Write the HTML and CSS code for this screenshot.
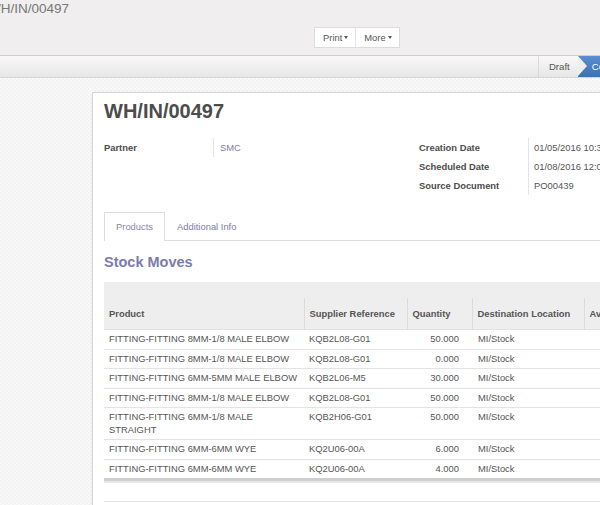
FILE: index.html
```html
<!DOCTYPE html>
<html>
<head>
<meta charset="utf-8">
<link rel="stylesheet" href="styles.css">
</head>
<body>
<div class="cp">
  <div class="cp-left">
    <div class="breadcrumb">WH/IN/00497</div>
  </div>
  <div class="cp-right">
    <div class="btn-group">
      <button class="btn">Print<span class="caret"></span></button><button class="btn">More<span class="caret"></span></button>
    </div>
  </div>
</div>
<div class="statusbar">
  <span class="st st-draft">Draft</span><span class="st st-current">Confirmed</span>
</div>
<div class="sheet-bg">
  <div class="sheet">
    <h1 class="title">WH/IN/00497</h1>
    <div class="groups">
      <div class="group group-left">
        <div class="frow"><div class="lbl">Partner</div><div class="val link">SMC</div></div>
      </div>
      <div class="group group-right">
        <div class="frow"><div class="lbl">Creation Date</div><div class="val">01/05/2016 10:35:12</div></div>
        <div class="frow"><div class="lbl">Scheduled Date</div><div class="val">01/08/2016 12:00:00</div></div>
        <div class="frow"><div class="lbl">Source Document</div><div class="val">PO00439</div></div>
      </div>
    </div>
    <div class="tabs">
      <span class="tab active">Products</span><span class="tab">Additional Info</span>
    </div>
    <h2 class="section">Stock Moves</h2>
    <table class="list">
      <colgroup><col class="c1"><col class="c2"><col class="c3"><col class="c4"><col class="c5"></colgroup>
      <thead>
        <tr class="pager-row"><th colspan="5"></th></tr>
        <tr class="head-row"><th>Product</th><th>Supplier Reference</th><th>Quantity</th><th>Destination Location</th><th>Availability</th></tr>
      </thead>
      <tbody>
        <tr><td>FITTING-FITTING 8MM-1/8 MALE ELBOW</td><td>KQB2L08-G01</td><td class="num">50.000</td><td>MI/Stock</td><td></td></tr>
        <tr><td>FITTING-FITTING 8MM-1/8 MALE ELBOW</td><td>KQB2L08-G01</td><td class="num">0.000</td><td>MI/Stock</td><td></td></tr>
        <tr><td>FITTING-FITTING 6MM-5MM MALE ELBOW</td><td>KQB2L06-M5</td><td class="num">30.000</td><td>MI/Stock</td><td></td></tr>
        <tr><td>FITTING-FITTING 8MM-1/8 MALE ELBOW</td><td>KQB2L08-G01</td><td class="num">50.000</td><td>MI/Stock</td><td></td></tr>
        <tr><td>FITTING-FITTING 6MM-1/8 MALE STRAIGHT</td><td>KQB2H06-G01</td><td class="num">50.000</td><td>MI/Stock</td><td></td></tr>
        <tr><td>FITTING-FITTING 6MM-6MM WYE</td><td>KQ2U06-00A</td><td class="num">6.000</td><td>MI/Stock</td><td></td></tr>
        <tr><td>FITTING-FITTING 6MM-6MM WYE</td><td>KQ2U06-00A</td><td class="num">4.000</td><td>MI/Stock</td><td></td></tr>
      </tbody>
    </table>
    <div class="list-foot"><div class="list-foot-inner"></div></div>
  </div>
</div>
</body>
</html>
```
FILE: styles.css
```css
html, body {
  margin: 0;
  padding: 0;
  width: 600px;
  height: 505px;
  overflow: hidden;
  font-family: "Liberation Sans", Arial, sans-serif;
  color: #555;
}

.cp {
  height: 55px;
  background: #f0eeee;
  border-bottom: 1px solid #cfcfcf;
  display: grid;
  grid-template-columns: 300px 300px;
}

.breadcrumb {
  margin-left: -12px;
  padding-top: 1px;
  font-size: 13.5px;
  line-height: 16px;
  color: #777;
  white-space: nowrap;
}

.cp-right {
  padding: 27px 0 0 14px;
}

.btn-group {
  display: flex;
}

.btn {
  height: 21px;
  padding: 0 7px 0 8px;
  margin: 0;
  background: #fff;
  border: 1px solid #dcdcdc;
  font-family: "Liberation Sans", Arial, sans-serif;
  font-size: 9.4px;
  color: #555;
  display: flex;
  align-items: center;
  gap: 2px;
}

.btn + .btn {
  border-left: 1px solid #e4e4e4;
  margin-left: -1px;
}

.caret {
  display: inline-block;
  width: 0;
  height: 0;
  border-top: 3px solid #555;
  border-left: 2.5px solid transparent;
  border-right: 2.5px solid transparent;
}

.statusbar {
  height: 21px;
  background: linear-gradient(#f9f9f9, #e6e6e6);
  border-bottom: 1px solid #d6d6d6;
  display: flex;
  justify-content: flex-end;
  overflow: hidden;
}

.st {
  font-size: 9.6px;
  line-height: 21px;
  white-space: nowrap;
  position: relative;
}

.st-draft {
  padding: 0 8px 0 10px;
  border-left: 1px solid #d9d9d9;
  color: #555;
  z-index: 1;
}

.st-draft::after {
  content: "";
  position: absolute;
  right: -9px;
  top: 0;
  width: 0;
  height: 0;
  border-top: 10.5px solid transparent;
  border-bottom: 10.5px solid transparent;
  border-left: 9px solid #eeeeee;
}

.st-current {
  background: linear-gradient(#5b8ed1, #3d6fb3);
  color: #fff;
  padding: 0 20px 0 14px;
  margin-right: -56px;
}

.sheet-bg {
  height: 413px;
  padding: 14px 0 0 92px;
  background-color: #f6f6f6;
  background-image: repeating-conic-gradient(#f3f3f3 0 25%, #f9f9f9 0 50%);
  background-size: 4px 4px;
  overflow: hidden;
}

.sheet {
  width: 620px;
  background: #fff;
  border: 1px solid #d6d6d6;
  box-shadow: 0 1px 3px rgba(0, 0, 0, 0.08);
  padding: 7px 0 0 11px;
  min-height: 420px;
}

.title {
  margin: 0;
  font-size: 20px;
  line-height: 22px;
  font-weight: bold;
  color: #4c4c4c;
}

.groups {
  display: flex;
  margin-top: 16px;
}

.group-left {
  width: 315px;
}

.frow {
  display: flex;
  font-size: 9.4px;
  line-height: 19px;
}

.lbl {
  width: 109px;
  font-weight: bold;
  color: #4c4c4c;
}

.val {
  border-left: 1px solid #e4e4e4;
  padding-left: 6px;
  color: #555;
  white-space: nowrap;
}

.group-right .val {
  padding-left: 5px;
}

.link {
  color: #7c7bad;
}

.tabs {
  margin-top: 17px;
  display: flex;
  border-bottom: 1px solid #dddddd;
}

.tab {
  font-size: 9.4px;
  line-height: 27px;
  padding: 0 11px;
  border: 1px solid transparent;
  border-bottom: none;
  color: #7c7bad;
}

.tab.active {
  border-color: #dddddd;
  background: #fff;
  margin-bottom: -1px;
  padding-bottom: 1px;
  color: #8785a8;
}

.section {
  margin: 12px 0 11px;
  font-size: 14.5px;
  line-height: 18px;
  font-weight: bold;
  color: #7c7bad;
}

.list {
  table-layout: fixed;
  width: 560px;
  border-collapse: collapse;
  font-size: 9.4px;
}

.c1 { width: 200px; }
.c2 { width: 103px; }
.c3 { width: 65px; }
.c4 { width: 112px; }
.c5 { width: 80px; }

.pager-row th {
  height: 16px;
  padding: 0;
  background: #eeeeee;
}

.head-row th {
  background: #eeeeee;
  padding: 9px 5px;
  line-height: 13px;
  text-align: left;
  font-weight: bold;
  color: #555;
  border-left: 1px solid #dcdcdc;
  white-space: nowrap;
  overflow: hidden;
}

.head-row th:first-child {
  border-left: none;
}

.list td {
  padding: 3px 3px 3px 5px;
  line-height: 12.5px;
  border-top: 1px solid #e3e3e3;
  color: #555;
  vertical-align: top;
}

.list td:nth-child(4) {
  padding-left: 6px;
}

.list td.num {
  text-align: right;
  padding-right: 13px;
}

.list-foot {
  border-top: 3px solid #cfcfcf;
  width: 560px;
}

.list-foot-inner {
  border-top: 2px solid #e8e8e8;
  height: 18px;
  border-bottom: 1px solid #e4e4e4;
}
```
